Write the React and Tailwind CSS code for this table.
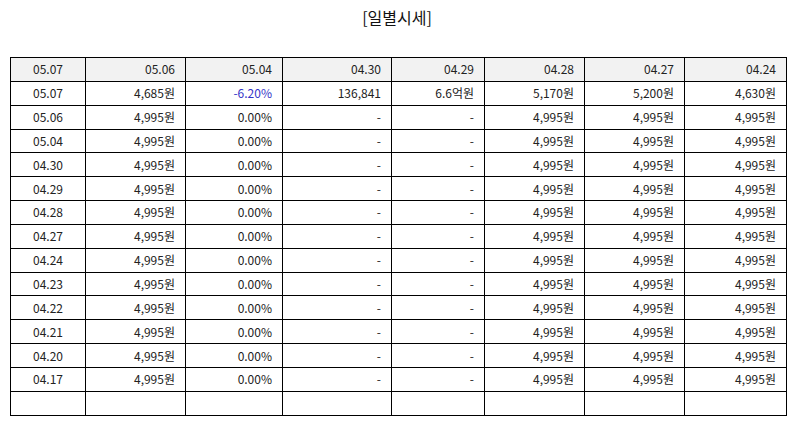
import React from 'react';

const cols = [75, 100, 97, 109, 93, 100, 100, 102];
const heads = ['05.07', '05.06', '05.04', '04.30', '04.29', '04.28', '04.27', '04.24'];

const dates = ['05.06', '05.04', '04.30', '04.29', '04.28', '04.27', '04.24', '04.23', '04.22', '04.21', '04.20', '04.17'];

const rows = [
  ['05.07', '4,685원', '-6.20%', '136,841', '6.6억원', '5,170원', '5,200원', '4,630원'],
  ...dates.map((d) => [d, '4,995원', '0.00%', '-', '-', '4,995원', '4,995원', '4,995원']),
  ['', '', '', '', '', '', '', ''],
];

export default function App() {
  return (
    <div className="w-[794px] h-[425px] bg-white text-[#222] font-['Noto_Sans_CJK_KR','Noto_Sans',sans-serif]">
      <h1 className="pt-[5px] text-center text-[16px] leading-[24px] text-[#111]">[일별시세]</h1>

      <table className="mt-[28px] ml-[10px] w-[777px] table-fixed border-collapse text-[12px] leading-none">
        <colgroup>
          {cols.map((w, i) => (
            <col key={i} style={{ width: w }} />
          ))}
        </colgroup>
        <thead>
          <tr className="h-[23.85px] bg-[#f2f2f2]">
            {heads.map((h, i) => (
              <th
                key={i}
                className={`border border-black font-normal px-[10px] py-0 ${i === 0 ? 'text-center' : 'text-right'}`}
              >
                {h}
              </th>
            ))}
          </tr>
        </thead>
        <tbody>
          {rows.map((r, ri) => (
            <tr key={ri} className="h-[23.85px]">
              {r.map((c, ci) => (
                <td
                  key={ci}
                  className={`border border-black px-[10px] py-0 ${ci === 0 ? 'text-center' : 'text-right'} ${
                    ri === 0 && ci === 2 ? 'text-[#3434c8]' : ''
                  }`}
                >
                  {c}
                </td>
              ))}
            </tr>
          ))}
        </tbody>
      </table>
    </div>
  );
}
